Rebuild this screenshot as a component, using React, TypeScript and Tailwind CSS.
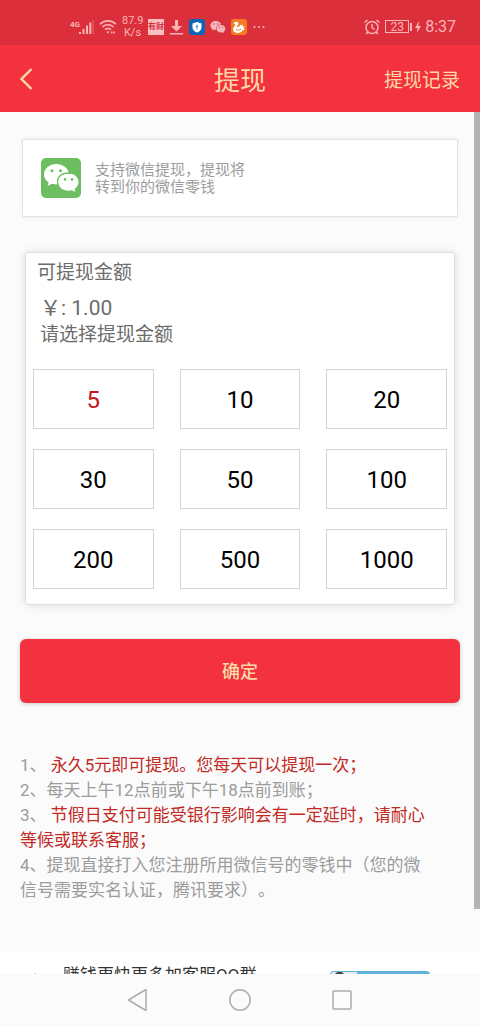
import { useState } from "react";

const AMOUNTS = [5, 10, 20, 30, 50, 100, 200, 500, 1000];

function ChatBubbles({ eye }: { eye: string }) {
  return (
    <>
      <path
        fill="#fff"
        d="M15.500 6C8.600 6 3 10.600 3 16.400c0 3.300 1.800 6.200 4.700 8.100L6.500 28l4.400-2.200c1.500.5 3 .8 4.600.8.4 0 .8 0 1.200-.1-.3-.9-.4-1.800-.4-2.700 0-5.200 5-9.400 11.200-9.400h.3C26.500 9.600 21.500 6 15.500 6Z"
      />
      <path
        fill="#fff"
        d="M37.500 24c0-4.800-4.600-8.700-10.200-8.700S17 19.200 17 24s4.600 8.700 10.300 8.700c1.300 0 2.500-.2 3.600-.5l3.600 1.900-1-3c2.400-1.600 4-4.200 4-7.100Z"
      />
      <g fill={eye}>
        <circle cx="11" cy="12.800" r="1.500" />
        <circle cx="19.500" cy="12.800" r="1.500" />
        <circle cx="24" cy="21.400" r="1.300" />
        <circle cx="31" cy="21.400" r="1.300" />
      </g>
    </>
  );
}

function StatusBar() {
  return (
    <div className="flex h-[45px] shrink-0 items-center justify-between bg-[#dc2f3c] pt-2 pr-6 pl-[70px] text-[#f9b4b6]">
      <div className="flex items-center gap-[5px]">
        <svg width="24" height="16" viewBox="0 0 24 16" fill="currentColor" aria-label="4G">
          <text x="0" y="8" fontSize="8" fontWeight="700" fontFamily="Roboto, sans-serif">4G</text>
          <path d="M9 13h2v2H9zM12.500 10h2v5h-2zM16 6.500h2V15h-2zM19.300 3.500h2V15h-2z" />
          <path d="M22.500 1h1.200v14h-1.200z" opacity=".4" />
        </svg>
        <svg width="18" height="16" viewBox="0 0 18 16" fill="none" stroke="currentColor" strokeWidth="1.600" aria-hidden="true">
          <path d="M1 5.200C5.500.8 12.500.8 17 5.200M3.400 8c3.200-3 8-3 11.200 0M5.900 10.700c1.800-1.600 4.400-1.600 6.200 0" />
          <path d="M7.300 12.500h3.400L9 14.800Z" fill="currentColor" stroke="none" />
          <path d="M12 13.500h4" strokeWidth="2" strokeDasharray="1.500 1" />
        </svg>
        <div className="w-[21px] text-center text-[11px] leading-[12px]">
          87.9
          <br />
          K/s
        </div>
        <div className="flex h-4 w-4 items-center justify-center bg-[#f9c0c2] text-[8px] leading-none font-bold text-[#d6303c]">
          有财
        </div>
        <svg width="15" height="16" viewBox="0 0 15 16" fill="currentColor" aria-hidden="true">
          <path d="M6 1h3v6h4l-5.500 5.500L2 7h4zM1 14h13v1.400H1z" />
        </svg>
        <svg width="16" height="16" viewBox="0 0 16 16" aria-hidden="true">
          <rect width="16" height="16" rx="3" fill="#0868b5" />
          <path d="M8 3l4.500 1.500v4C12.500 11 10.500 12.600 8 13.500 5.500 12.600 3.500 11 3.500 8.500v-4Z" fill="#fff" />
          <path d="M8 5.500v5M6.800 7.500h2.400" stroke="#3d9ae0" />
        </svg>
        <svg width="16" height="16" viewBox="2 3 37 34" opacity=".65" aria-hidden="true">
          <ChatBubbles eye="#dc2f3c" />
        </svg>
        <svg width="16" height="16" viewBox="0 0 16 16" aria-hidden="true">
          <rect width="16" height="16" rx="3" fill="#f57c20" />
          <path
            d="M3 3.500c2-1.500 4.500-1 4.500 1 0 1.500-2 2.500-2 3.500 1.500.5 3-.5 4-2.500l1 1 1.500-1-.3 2 2 .3-1.200 1.700 1 1.500-2 .3c-.5 2-2.500 2.700-4.500 2.700-3 0-5-1.300-5-3.500C2 8.500 4 7 4.500 5.500L2.500 5Z"
            fill="#fff"
          />
          <path d="M5 10.500c1.500 1 3.500.8 5-.5" stroke="#f57c20" fill="none" />
        </svg>
        <svg width="14" height="16" viewBox="0 0 14 16" fill="currentColor" aria-hidden="true">
          <circle cx="2.500" cy="8" r="1" />
          <circle cx="7" cy="8" r="1" />
          <circle cx="11.500" cy="8" r="1" />
        </svg>
      </div>
      <div className="flex items-center gap-1">
        <svg width="18" height="18" viewBox="0 0 18 18" fill="none" stroke="currentColor" strokeWidth="1.500" aria-hidden="true">
          <circle cx="9" cy="9.500" r="6" />
          <path d="M9 6v3.700l2.500 1.800M1.500 4.500 4.500 2M16.500 4.500l-3-2.500M4.700 14l-1.500 2M13.300 14l1.500 2" />
        </svg>
        <div className="flex items-center">
          <div className="flex h-[13px] w-6 items-center justify-center border border-current text-[12px] leading-none">23</div>
          <div className="ml-px h-2 w-0.5 bg-current" />
          <svg className="ml-[3px]" width="6" height="12" viewBox="0 0 6 12" fill="currentColor" aria-hidden="true">
            <path d="M4 0 0 7h2.500L1.800 12 6 5H3.300Z" />
          </svg>
        </div>
        <span className="text-base leading-5">8:37</span>
      </div>
    </div>
  );
}

export default function App() {
  const [selected, setSelected] = useState(5);

  return (
    <div className="flex h-screen flex-col bg-[#fbfbfb] font-['Roboto','Noto_Sans_CJK_SC',sans-serif] [text-spacing-trim:space-all]" lang="zh-CN">
      <StatusBar />
      <header className="grid h-[67px] shrink-0 grid-cols-3 items-center bg-[#f4313f] px-5 text-[#fbd9a5]">
        <button type="button" aria-label="返回" className="w-fit">
          <svg width="13" height="24" viewBox="0 0 13 24" fill="none" stroke="currentColor" strokeWidth="2.400" aria-hidden="true">
            <path d="M11.500 2 1.500 12l10 10" />
          </svg>
        </button>
        <h1 className="pt-1 text-center text-[26px] leading-8">提现</h1>
        <a href="#records" className="justify-self-end pt-1 text-[19px] leading-6 whitespace-nowrap">
          提现记录
        </a>
      </header>

      <main className="relative min-h-0 flex-1 overflow-hidden pt-[27px]">
        <div className="absolute top-0 right-0 h-[797px] w-1.5 bg-[#b4b4b4]" />

        <section className="mx-[22px] flex items-center gap-[14px] border border-[#e4e4e4] bg-white px-[18px] py-[18px] shadow-[0_0_3px_#00000014]">
          <svg width="40" height="40" viewBox="0 0 40 40" aria-label="微信">
            <rect width="40" height="40" rx="5" fill="#6dbe60" />
            <ChatBubbles eye="#6dbe60" />
            <path d="M29.500 15.500C22 13.600 16.500 18 16.500 24c0 2 .6 3.300 1.500 4.600" fill="none" stroke="#6dbe60" strokeWidth="1.200" />
          </svg>
          <p className="pt-0.5 text-[15px] leading-[17px] text-[#9c9c9c]">
            支持微信提现，提现将
            <br />
            转到你的微信零钱
          </p>
        </section>

        <section className="mx-[25px] mt-[35px] rounded border border-[#dedede] bg-white px-[7px] pt-2 pb-[15px] text-[#6c6c6c] shadow-[0_0_8px_#00000022]">
          <h2 className="pl-1 text-[19px] leading-6">可提现金额</h2>
          <p className="mt-2 pl-[7px] text-[21px] leading-[30px]">￥: 1.00</p>
          <p className="pl-[7px] text-[19px] leading-6">请选择提现金额</p>
          <div className="mt-[22px] grid grid-cols-3 gap-x-[26px] gap-y-5">
            {AMOUNTS.map((amount) => (
              <button
                key={amount}
                type="button"
                aria-pressed={selected === amount}
                onClick={() => setSelected(amount)}
                className={`h-[60px] border border-[#d4d4d4] pt-0.5 text-2xl ${selected === amount ? "text-[#c4161c]" : "text-black"}`}
              >
                {amount}
              </button>
            ))}
          </div>
        </section>

        <div className="px-5 pt-[34px]">
          <button
            type="button"
            className="h-16 w-full rounded-md bg-[#f4313f] pt-0.5 text-lg font-medium text-[#fbd9a5] shadow-[0_1px_4px_#00000033]"
          >
            确定
          </button>
        </div>

        <div className="mt-[50px] pr-11 pl-5 text-[17px] leading-[25px] text-[#9c9c9c]">
          <p>
            1、 <span className="text-[#c22a26]">永久5元即可提现。您每天可以提现一次；</span>
          </p>
          <p>2、每天上午12点前或下午18点前到账；</p>
          <p>
            3、 <span className="text-[#c22a26]">节假日支付可能受银行影响会有一定延时，请耐心等候或联系客服；</span>
          </p>
          <p>4、提现直接打入您注册所用微信号的零钱中（您的微信号需要实名认证，腾讯要求）。</p>
        </div>

        <section className="mt-12 flex items-start bg-white pt-3 pb-4 pl-[30px]">
          <svg className="mt-2.5 mr-[23px]" width="10" height="16" viewBox="0 0 10 16" fill="#bbb" aria-hidden="true">
            <path d="M5 0 10 5v11L5 12H0V4Z" />
          </svg>
          <p className="text-[17px] leading-6 whitespace-nowrap text-[#333]">赚钱更快更多加客服QQ群</p>
          <a href="#group" aria-label="加入QQ群" className="mt-2 ml-[74px] block">
            <svg width="100" height="28" viewBox="0 0 100 28" aria-hidden="true">
              <rect width="100" height="28" rx="4" fill="#5fb2dc" />
              <path d="M4 1h23v26H4a3 3 0 0 1-3-3V4a3 3 0 0 1 3-3Z" fill="#e9eef2" />
              <path d="M5 4c0-2 2-3 4.500-3S14 2 14 4v20H5Z" fill="#444" />
            </svg>
          </a>
        </section>
      </main>

      <nav className="flex h-[52px] shrink-0 items-center justify-center gap-20 bg-[#fbfbfb] text-[#adadad]">
        <button type="button" aria-label="返回上一页">
          <svg width="22" height="24" viewBox="0 0 22 24" fill="none" stroke="currentColor" strokeWidth="1.500" strokeLinejoin="round" aria-hidden="true">
            <path d="M19 1.500v21L1.500 12Z" />
          </svg>
        </button>
        <button type="button" aria-label="主屏幕">
          <svg width="22" height="22" viewBox="0 0 22 22" fill="none" stroke="currentColor" strokeWidth="1.500" aria-hidden="true">
            <circle cx="11" cy="11" r="10.200" />
          </svg>
        </button>
        <button type="button" aria-label="最近任务">
          <svg width="22" height="22" viewBox="0 0 22 22" fill="none" stroke="currentColor" strokeWidth="1.500" aria-hidden="true">
            <rect x="2" y="2" width="18" height="18" rx="1" />
          </svg>
        </button>
      </nav>
    </div>
  );
}
